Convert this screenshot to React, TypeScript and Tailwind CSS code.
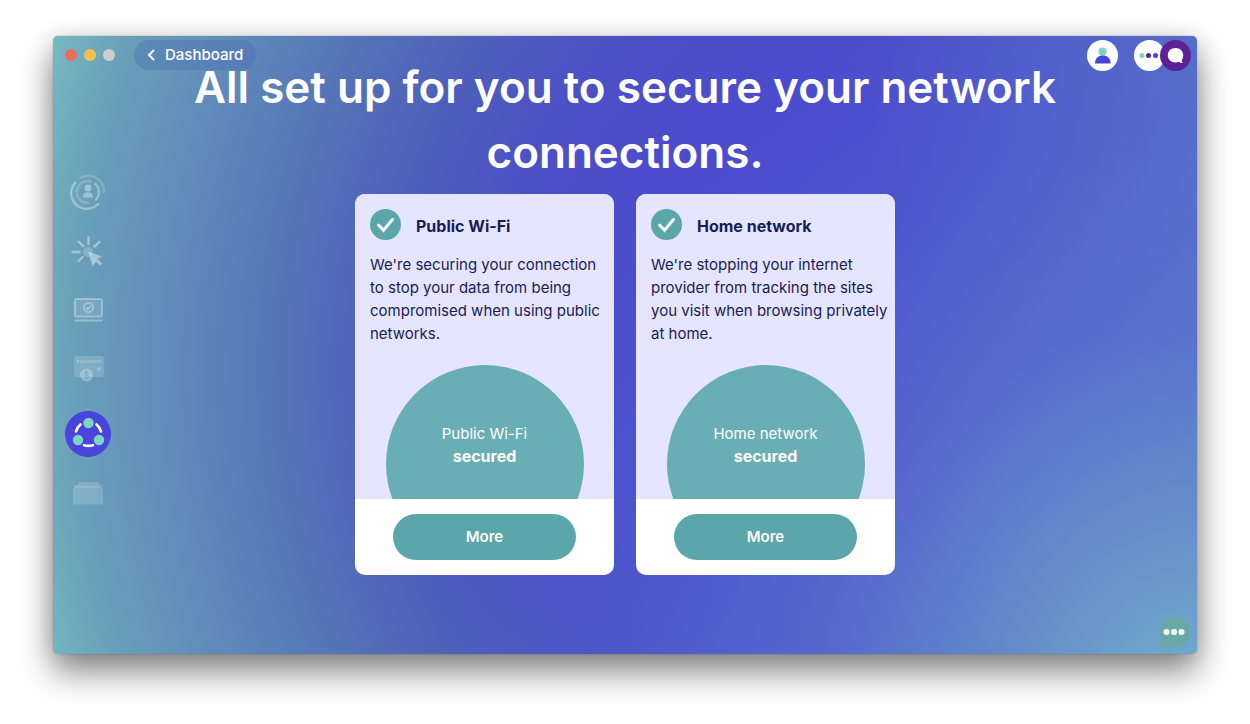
import type { ReactNode } from "react";

interface NetworkCardProps {
  title: string;
  description: string;
}

const cards: NetworkCardProps[] = [
  {
    title: "Public Wi-Fi",
    description:
      "We're securing your connection to stop your data from being compromised when using public networks.",
  },
  {
    title: "Home network",
    description:
      "We're stopping your internet provider from tracking the sites you visit when browsing privately at home.",
  },
];

function IdentityIcon() {
  return (
    <svg width="36" height="36" viewBox="0 0 36 36" fill="none" stroke="#fff" strokeLinecap="round">
      <path d="M5.5 8.5A15.500 15.500 0 0 0 28 30" strokeOpacity="0.35" strokeWidth="2.4" />
      <path d="M11 3.800A15.500 15.500 0 0 1 34 18" strokeOpacity="0.18" strokeWidth="2.4" />
      <path d="M25.500 10A11 11 0 0 1 26 25.500" strokeOpacity="0.35" strokeWidth="2.4" />
      <path d="M21 7.500A11 11 0 1 0 18.500 29" strokeOpacity="0.2" strokeWidth="2.4" />
      <g fill="#fff" fillOpacity="0.38" stroke="none">
        <circle cx="18" cy="14" r="3.4" />
        <path d="M12.800 23.500c0-3.600 2.200-5 5.200-5s5.200 1.400 5.200 5z" />
      </g>
    </svg>
  );
}

function ClickIcon() {
  return (
    <svg width="36" height="36" viewBox="0 0 36 36" fill="none" strokeLinecap="round">
      <path
        d="M18.500 4.500v6.500M8.500 8.500l4.500 4.500M29.500 9l-5 4.500M2.500 19h7M12.500 24l-4 4"
        stroke="#fff"
        strokeOpacity="0.4"
        strokeWidth="2.4"
      />
      <circle cx="18" cy="19" r="5" fill="#fff" fillOpacity="0.2" />
      <path
        d="M18 18.500l14 5-4.500 2.500 4.500 4.500-2 2-4-3.500-3.500 4z"
        fill="#fff"
        fillOpacity="0.42"
      />
    </svg>
  );
}

function LaptopIcon() {
  return (
    <svg width="32" height="28" viewBox="0 0 32 28" fill="none" stroke="#fff">
      <rect x="3" y="3" width="27" height="17.500" rx="1.800" fill="#fff" fillOpacity="0.1" strokeOpacity="0.34" strokeWidth="2" />
      <circle cx="16.500" cy="11.500" r="4.600" strokeOpacity="0.3" strokeWidth="2" />
      <path d="M14.400 11.600l1.600 1.600 3-3.200" strokeOpacity="0.4" strokeWidth="1.600" />
      <path d="M3 24.500h27" strokeOpacity="0.34" strokeWidth="2" strokeLinecap="round" />
    </svg>
  );
}

function PaymentIcon() {
  return (
    <svg width="32" height="28" viewBox="0 0 32 28" fill="none">
      <rect x="2" y="1" width="30" height="21" rx="3" fill="#fff" fillOpacity="0.17" />
      <path d="M5 6.500h24" stroke="#fff" strokeOpacity="0.24" strokeWidth="2.500" strokeDasharray="2 0.800" />
      <circle cx="27" cy="14" r="2" fill="#fff" fillOpacity="0.2" />
      <circle cx="14.500" cy="20" r="6.500" fill="#fff" fillOpacity="0.28" />
      <path
        d="M16.500 17.500c-2-1.500-4 0-4 1 0 2 4 1 4 3 0 1.500-2.500 2-4 .500M14.500 15.500v9"
        stroke="#6a9bbb"
        strokeOpacity="0.6"
      />
    </svg>
  );
}

function NetworkIcon() {
  return (
    <svg width="46" height="46" viewBox="0 0 46 46" fill="none">
      <circle cx="23" cy="23" r="23" fill="#4844dc" />
      <path
        d="M11 20.500c.800-3 2.300-5.300 4.500-7M36 20.500c-.800-3-2.300-5.300-4.500-7M19 34.300c3 .800 6 .800 9 0"
        stroke="#fff"
        strokeWidth="2.600"
        strokeLinecap="round"
      />
      <circle cx="23.500" cy="12" r="5.200" fill="#7ed3c5" />
      <circle cx="13" cy="29" r="5.200" fill="#7ed3c5" />
      <circle cx="34" cy="29" r="5.200" fill="#7ed3c5" />
    </svg>
  );
}

function WalletIcon() {
  return (
    <svg width="32" height="26" viewBox="0 0 32 26" fill="#fff">
      <path d="M6 3.500a1.500 1.500 0 0 1 1.500-1.500h18a1.500 1.500 0 0 1 1.500 1.500V5H6z" fillOpacity="0.17" />
      <rect x="2" y="5" width="28" height="4" fillOpacity="0.2" />
      <path d="M5 7h22" stroke="#fff" strokeOpacity="0.12" strokeWidth="2" strokeDasharray="2 1" />
      <path d="M1 9h30v13.500a2 2 0 0 1-2 2H3a2 2 0 0 1-2-2z" fillOpacity="0.17" />
      <circle cx="16" cy="17" r="2" fillOpacity="0.06" />
    </svg>
  );
}

const navItems: { label: string; icon: ReactNode; active?: boolean }[] = [
  { label: "Identity", icon: <IdentityIcon /> },
  { label: "Browsing", icon: <ClickIcon /> },
  { label: "Device", icon: <LaptopIcon /> },
  { label: "Payments", icon: <PaymentIcon /> },
  { label: "Networks", icon: <NetworkIcon />, active: true },
  { label: "Wallet", icon: <WalletIcon /> },
];

function TitleBar() {
  return (
    <header className="relative z-10 flex h-[35px] items-start justify-between pt-1 pl-3 pr-1.5">
      <div className="flex h-[30px] items-center">
        <div className="flex gap-[7px]">
          <span className="size-3 rounded-full bg-[#ed6a5f]" />
          <span className="size-3 rounded-full bg-[#f5bf4f]" />
          <span className="size-3 rounded-full bg-[#cdcdcd]" />
        </div>
        <button className="ml-[19px] flex h-[30px] items-center gap-2.5 rounded-full bg-[#4a6fb0]/40 px-[13px] text-[15px] font-medium text-white">
          <svg width="8" height="12" viewBox="0 0 8 12" fill="none">
            <path d="M6.500 1.500L2 6l4.500 4.500" stroke="#fff" strokeWidth="2" strokeLinecap="round" />
          </svg>
          Dashboard
        </button>
      </div>
      <div className="flex items-center">
        <button aria-label="Account" className="mr-4 size-[31px] rounded-full bg-white">
          <svg width="31" height="31" viewBox="0 0 31 31">
            <circle cx="15.500" cy="11.500" r="4" fill="#7ed3c5" />
            <path d="M8 23.500c0-5.500 3.500-8 7.800-8s7.800 2.500 7.800 8z" fill="#4844dc" />
          </svg>
        </button>
        <button aria-label="More apps" className="size-[31px] rounded-full bg-white">
          <svg width="31" height="31" viewBox="0 0 31 31">
            <circle cx="8" cy="15.500" r="2.500" fill="#7ed3c5" />
            <circle cx="14.500" cy="15.500" r="2.500" fill="#5c2295" />
            <circle cx="21.500" cy="15.500" r="2.500" fill="#4844dc" />
          </svg>
        </button>
        <button aria-label="Messages" className="-ml-[5px] size-[31px] rounded-full bg-[#5c2295]">
          <svg width="31" height="31" viewBox="0 0 31 31">
            <path
              d="M15.500 8C10.700 8 7.800 11.200 7.800 15.200s3 7.200 7.700 7.200c1.300 0 2.500-.200 3.500-.700 1 1 2.300 1.300 3.800 1.200-.800-.900-1.200-1.900-1.100-2.900 1-1.200 1.500-2.900 1.500-4.800 0-4-3-7.200-7.700-7.200z"
              fill="#fff"
            />
          </svg>
        </button>
      </div>
    </header>
  );
}

function NetworkCard({ title, description }: NetworkCardProps) {
  return (
    <article className="w-[259px] overflow-hidden rounded-[10px] bg-white">
      <div className="bg-[#e6e5ff] px-[15px] pt-[15px] text-[#171d55]">
        <div className="flex items-center gap-[15px]">
          <svg width="31" height="31" viewBox="0 0 31 31" fill="none">
            <circle cx="15.500" cy="15.500" r="15.500" fill="#5aa6aa" />
            <path d="M8.500 16l5 5.200L22.500 10.500" stroke="#fff" strokeWidth="3" strokeLinecap="round" />
          </svg>
          <h2 className="pt-1 text-[16px] leading-[23px] font-bold">{title}</h2>
        </div>
        <p className="-mr-2.5 mt-[13px] text-[15px] leading-[23px]">{description}</p>
        {/* Status circle, cut off by the footer */}
        <div className="mt-5 flex h-[134px] justify-center overflow-hidden">
          <div className="size-[198px] shrink-0 rounded-full bg-[#69aeb4] pt-[57px] text-center text-[15px] leading-[23px] text-white">
            <p>{title}</p>
            <p className="text-[16px] font-bold">secured</p>
          </div>
        </div>
      </div>
      <div className="flex justify-center py-[15px]">
        <button className="h-[46px] w-[183px] rounded-full bg-[#5aa6aa] text-[15px] font-semibold text-white">
          More
        </button>
      </div>
    </article>
  );
}

export default function App() {
  return (
    <div className="bg-white px-[53px] pt-9 pb-[70px] font-['Inter',sans-serif]">
      <div className="overflow-hidden rounded-[5px] bg-[radial-gradient(ellipse_760px_760px_at_100%_108%,#74afcb_0%,#6998cad8_24%,#5c7acf98_50%,#546fcf48_75%,#5068cf00_100%),radial-gradient(ellipse_360px_700px_at_103%_20%,#5c7ad0b0_0%,#5068cf00_100%),radial-gradient(ellipse_860px_1000px_at_70%_54%,#4b49cf_0%,#4b4bcd_28%,#4c50c6_42%,#4e5ebb_54%,#5573b8_66%,#608cba_80%,#6aa0b9_91%,#72b0bf_96%,#7abcc4_100%)] shadow-[0_0_1px_#0008,0_18px_34px_#0007,0_2px_22px_#0002]">
        <TitleBar />
        <div className="grid grid-cols-[70px_1fr_70px]">
          <nav className="pt-[98px]">
            <ul className="flex flex-col items-center gap-[13px]">
              {navItems.map((item) => (
                <li key={item.label} className={item.active ? "mt-1.5" : ""}>
                  <a href="#" aria-label={item.label} className="flex size-[46px] items-center justify-center">
                    {item.icon}
                  </a>
                </li>
              ))}
            </ul>
          </nav>

          <main className="-mt-4 pb-[79px]">
            <h1 className="text-center text-[44px] leading-[65px] font-semibold text-white">
              All set up for you to secure your network connections.
            </h1>
            <div className="mt-[9px] flex flex-wrap justify-center gap-[22px]">
              {cards.map((card) => (
                <NetworkCard key={card.title} {...card} />
              ))}
            </div>
          </main>

          <div className="flex items-end justify-end pr-[7px] pb-1.5">
            <button aria-label="Open chat" className="size-[31px]">
              <svg width="31" height="31" viewBox="0 0 31 31">
                <path
                  d="M15.500 0a15.200 15.200 0 0 1 0 30.500H1l2.500-5.500A15.200 15.200 0 0 1 15.500 0z"
                  fill="#68a9a7"
                />
                <g fill="#fff">
                  <circle cx="7.500" cy="15" r="3" />
                  <circle cx="15" cy="15" r="3" />
                  <circle cx="22.500" cy="15" r="3" />
                </g>
              </svg>
            </button>
          </div>
        </div>
      </div>
    </div>
  );
}
